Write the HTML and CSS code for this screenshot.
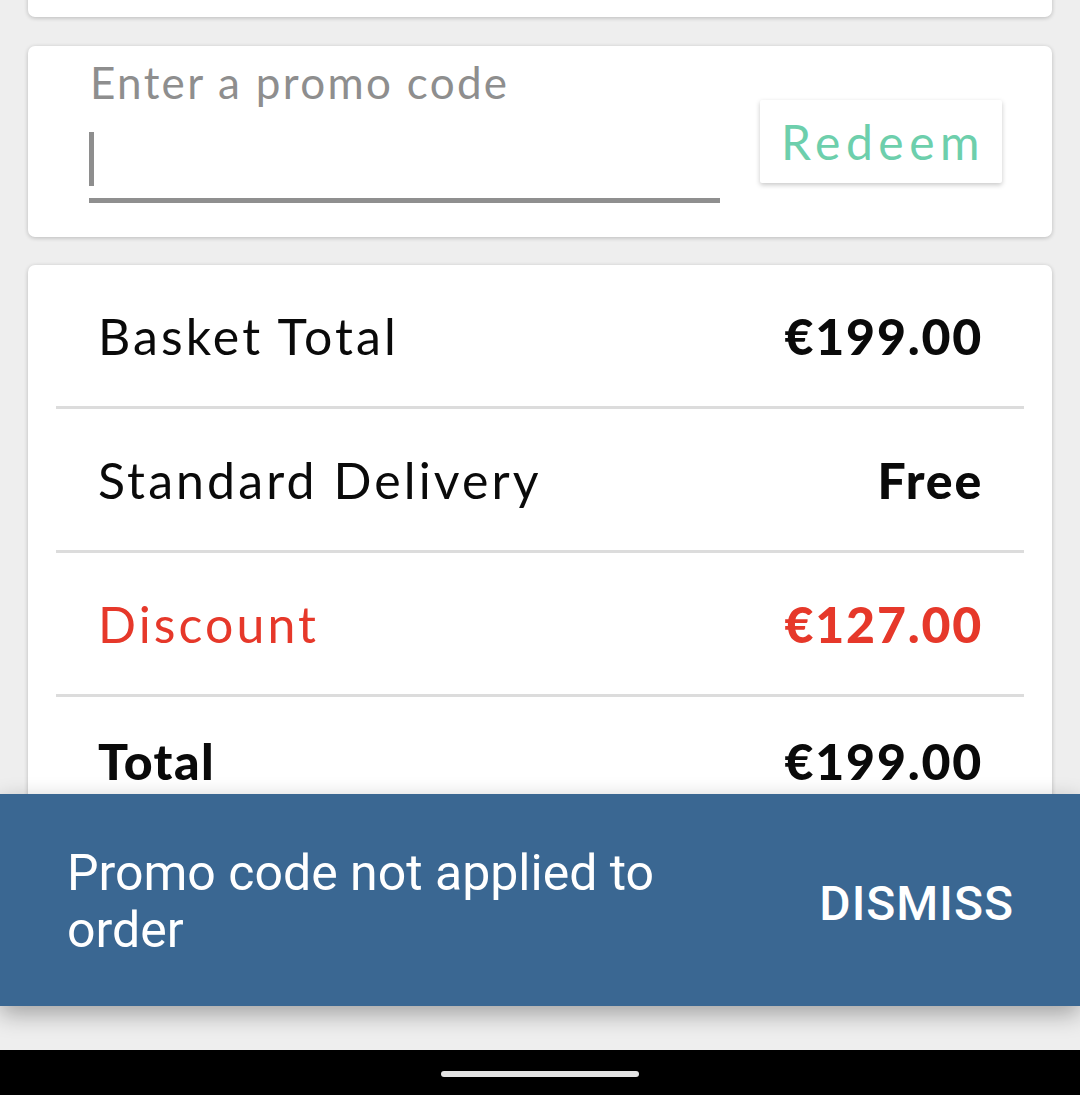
FILE: index.html
```html
<!DOCTYPE html>
<html lang="en">
<head>
<meta charset="utf-8">
<title>Basket</title>
<link rel="stylesheet" href="styles.css">
</head>
<body>
<div class="screen">
  <main class="content">
    <div class="card card-top"></div>
    <section class="card promo">
      <div class="promo-field">
        <div class="promo-label">Enter a promo code</div>
        <div class="promo-input"><span class="caret"></span></div>
      </div>
      <button class="redeem">Redeem</button>
    </section>
    <section class="card summary">
      <div class="row"><span class="label">Basket Total</span><span class="amt">€199.00</span></div>
      <div class="row"><span class="label">Standard Delivery</span><span class="amt">Free</span></div>
      <div class="row discount"><span class="label">Discount</span><span class="amt">€127.00</span></div>
      <div class="row total"><span class="label">Total</span><span class="amt">€199.00</span></div>
    </section>
    <div class="snackbar">
      <span class="snack-msg">Promo code not applied to order</span>
      <span class="snack-action">DISMISS</span>
    </div>
  </main>
  <nav class="navbar"><span class="pill"></span></nav>
</div>
</body>
</html>
```

FILE: styles.css
```css
html, body {
  margin: 0;
  padding: 0;
  background: #eeeeee;
}
.screen {
  height: 1095px;
  display: flex;
  flex-direction: column;
  overflow: hidden;
}
.content {
  flex: 1;
  position: relative;
  overflow: hidden;
  padding: 0 28px;
  font-family: Lato, "Open Sans", sans-serif;
}
.card {
  background: #ffffff;
  border-radius: 7px;
  box-shadow: 0 1px 4px rgba(0, 0, 0, 0.22);
}
.card-top {
  height: 60px;
  margin-top: -43px;
}
.promo {
  margin-top: 29px;
  height: 191px;
  box-sizing: border-box;
  display: flex;
  align-items: flex-start;
  padding: 11px 50px 0 61px;
  gap: 40px;
}
.promo-field {
  flex: 1;
}
.promo-label {
  font-size: 44px;
  line-height: 50px;
  color: #8e8e8e;
  letter-spacing: 2.3px;
  padding-left: 1px;
}
.promo-input {
  height: 91px;
  border-bottom: 5px solid #8f8f8f;
  display: flex;
  align-items: flex-start;
}
.caret {
  width: 5px;
  height: 54px;
  margin-top: 25px;
  background: #8e8e8e;
}
.redeem {
  margin-top: 43px;
  width: 242px;
  height: 83px;
  border: none;
  border-radius: 2px;
  background: #ffffff;
  box-shadow: 0 2px 5px rgba(0, 0, 0, 0.22);
  color: #6dcfac;
  font-family: Lato, "Open Sans", sans-serif;
  font-size: 48px;
  letter-spacing: 5.5px;
  text-indent: 4px;
  padding: 0;
}
.summary {
  margin-top: 28px;
  height: 715px;
  padding: 0 28px;
}
.row {
  height: 141px;
  border-bottom: 3px solid #dcdcdc;
  display: flex;
  align-items: center;
  justify-content: space-between;
  padding: 0 43px 0 42px;
  font-size: 50px;
  color: #0a0a0a;
}
.row .label {
  letter-spacing: 3.1px;
}
.row .amt {
  font-weight: 900;
  letter-spacing: 1.8px;
  margin-right: -2px;
}
.row.discount {
  color: #e6382a;
}
.row.total {
  height: 128px;
  border-bottom: none;
}
.row.total .label {
  font-weight: 900;
  letter-spacing: 1.5px;
}
.snackbar {
  position: absolute;
  left: 0;
  right: 0;
  bottom: 44px;
  height: 212px;
  box-sizing: border-box;
  background: #3a6792;
  box-shadow: 0 8px 22px rgba(0, 0, 0, 0.32);
  display: flex;
  align-items: center;
  justify-content: space-between;
  padding: 0 67px;
  font-family: Roboto, "Noto Sans", sans-serif;
  color: #ffffff;
}
.snack-msg {
  font-size: 50px;
  line-height: 57px;
  max-width: 640px;
  margin-top: 4px;
}
.snack-action {
  font-size: 48px;
  font-weight: 500;
  letter-spacing: 1px;
  margin-right: -1px;
  margin-top: 6px;
}
.navbar {
  height: 45px;
  background: #000000;
  display: flex;
  justify-content: center;
  padding-top: 21px;
  box-sizing: border-box;
}
.pill {
  width: 198px;
  height: 6px;
  border-radius: 3px;
  background: #e4e4e4;
}
```
